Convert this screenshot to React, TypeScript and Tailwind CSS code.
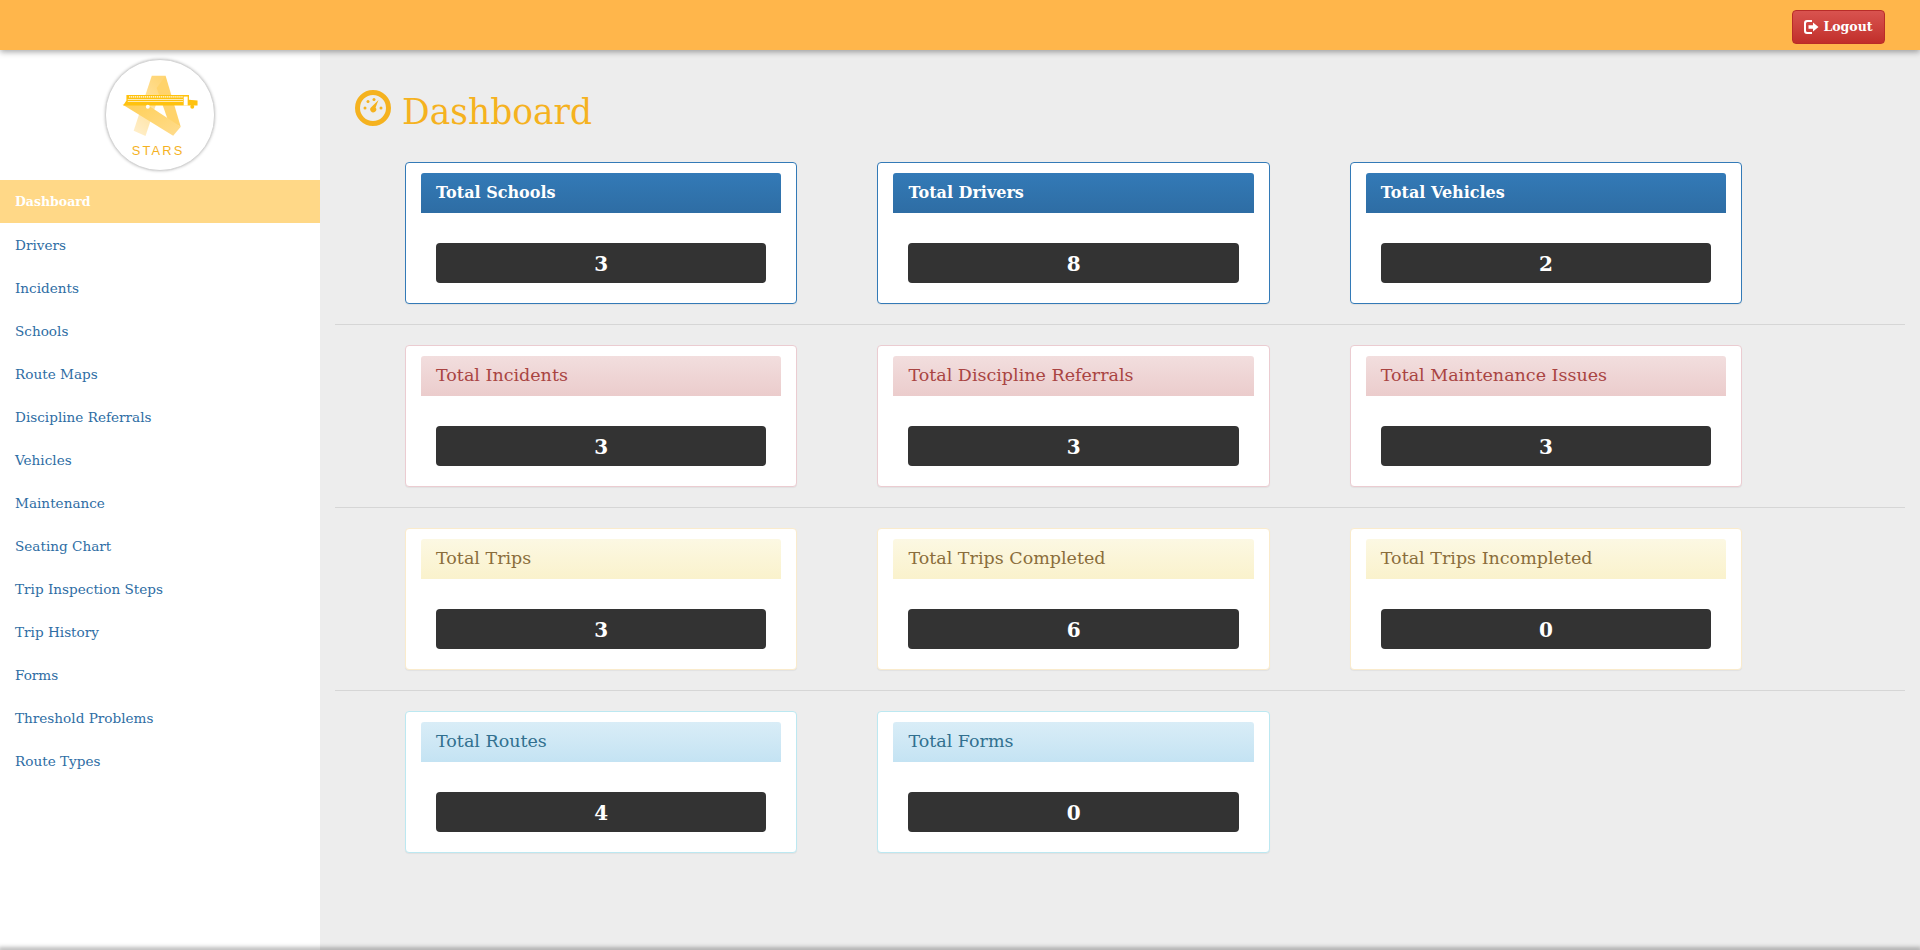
import React from "react";

const menu = [
  "Dashboard",
  "Drivers",
  "Incidents",
  "Schools",
  "Route Maps",
  "Discipline Referrals",
  "Vehicles",
  "Maintenance",
  "Seating Chart",
  "Trip Inspection Steps",
  "Trip History",
  "Forms",
  "Threshold Problems",
  "Route Types",
];

const tones = {
  primary: {
    box: "border-[#337ab7]",
    head: "bg-gradient-to-b from-[#337ab7] to-[#2e6da4] text-white font-bold text-[16px]",
  },
  danger: {
    box: "border-[#ebccd1]",
    head: "bg-gradient-to-b from-[#f2dede] to-[#ebcccc] text-[#a94442] text-[17.500px] pb-[2px]",
  },
  warning: {
    box: "border-[#faebcc]",
    head: "bg-gradient-to-b from-[#fcf8e3] to-[#faf2cc] text-[#8a6d3b] text-[17.500px] pb-[2px]",
  },
  info: {
    box: "border-[#bce8f1]",
    head: "bg-gradient-to-b from-[#d9edf7] to-[#c4e3f3] text-[#31708f] text-[17.500px] pb-[2px]",
  },
};

type Tone = keyof typeof tones;

const rows: { tone: Tone; items: [string, number][] }[] = [
  { tone: "primary", items: [["Total Schools", 3], ["Total Drivers", 8], ["Total Vehicles", 2]] },
  { tone: "danger", items: [["Total Incidents", 3], ["Total Discipline Referrals", 3], ["Total Maintenance Issues", 3]] },
  { tone: "warning", items: [["Total Trips", 3], ["Total Trips Completed", 6], ["Total Trips Incompleted", 0]] },
  { tone: "info", items: [["Total Routes", 4], ["Total Forms", 0]] },
];

const Logo = () => (
  <div className="w-[110px] h-[112px] rounded-full border border-[#d4d4d4] shadow-[0_0_3px_rgba(0,0,0,0.25)] bg-white">
    <svg viewBox="316 178 328 332" className="w-full h-full">
      <defs>
        <linearGradient id="leg" x1="0.7" y1="0" x2="0.2" y2="1">
          <stop offset="0" stopColor="#ffd677" />
          <stop offset="1" stopColor="#ffeec8" />
        </linearGradient>
        <linearGradient id="band" x1="0" y1="0" x2="1" y2="1">
          <stop offset="0" stopColor="#ffcf55" />
          <stop offset="1" stopColor="#ffdc8e" />
        </linearGradient>
      </defs>
      <polygon points="455,225 497,225 436,408 400,392" fill="url(#leg)" />
      <polygon points="497,225 543,380 505,362 470,262" fill="#ffd36b" />
      <polygon points="366,312 440,312 543,380 520,407" fill="url(#band)" />
      <polygon points="378,283 568,283 568,298 594,300 594,315 368,315 378,300" fill="#ffc20e" />
      <path d="M386 289 H550" stroke="#fff" strokeWidth="4" strokeDasharray="4 2" />
      <rect x="382" y="296" width="168" height="2" fill="#fff" />
      <rect x="382" y="302" width="168" height="2" fill="#fff" />
      <rect x="552" y="288" width="12" height="27" fill="#fff" />
      <circle cx="578" cy="319" r="6" fill="#ffc20e" />
      <circle cx="443" cy="319" r="6" fill="#fff" />
      <text
        x="471"
        y="465"
        textAnchor="middle"
        textLength="153"
        fontSize="39"
        fill="#f5b21f"
        fontFamily="'Liberation Sans', sans-serif"
      >
        STARS
      </text>
    </svg>
  </div>
);

const GaugeIcon = () => (
  <svg viewBox="0 0 36 36" className="w-9 h-9 shrink-0" fill="#f5b21f">
    <circle cx="18" cy="18" r="15.500" fill="none" stroke="#f5b21f" strokeWidth="5" />
    <circle cx="10" cy="18" r="1.500" />
    <circle cx="13" cy="11.500" r="1.500" />
    <circle cx="19" cy="9.500" r="1.500" />
    <circle cx="26" cy="18" r="1.500" />
    <path d="M23.500 10 L20.600 17.500 A3 3 0 1 1 16.400 17 Z" />
  </svg>
);

const LogoutIcon = () => (
  <svg viewBox="0 0 15 14" className="w-[15px] h-[14px]" fill="#fff">
    <path d="M3 0h5v2H3.500A1.500 1.500 0 0 0 2 3.500v7A1.500 1.500 0 0 0 3.500 12H8v2H3a3 3 0 0 1-3-3V3a3 3 0 0 1 3-3z" />
    <path d="M4.500 5.200h4.500V2.600L14.500 7 9 11.400V8.800H4.500z" />
  </svg>
);

const Card = ({ title, value, tone }: { title: string; value: number; tone: Tone }) => (
  <div className={`w-[392.400px] h-[142px] bg-white border rounded pt-[10px] px-[15px] shadow-[0_1px_1px_rgba(0,0,0,0.05)] ${tones[tone].box}`}>
    <div className={`h-10 pl-[15px] flex items-center rounded-t-[3px] ${tones[tone].head}`}>{title}</div>
    <div className="mt-[30px] mx-[15px] h-10 pt-px rounded bg-[#333333] text-white font-bold text-[20px] flex items-center justify-center">
      {value}
    </div>
  </div>
);

export default function App() {
  return (
    <div className="h-screen flex flex-col overflow-hidden bg-[#ededed] font-['DejaVu_Serif',serif]">
      <header className="relative z-10 h-[50px] shrink-0 bg-[#ffb64b] shadow-[0_2px_6px_rgba(0,0,0,0.35)] flex items-center justify-end pr-[35px]">
        <button className="w-[93px] h-[34px] mt-[4px] rounded border border-[#b92c28] bg-gradient-to-b from-[#d9534f] to-[#c12e2a] text-white text-[12.500px] font-bold flex items-center justify-center gap-[4px]">
          <LogoutIcon />
          Logout
        </button>
      </header>
      <div className="flex-1 flex min-h-0">
        <aside className="w-[320px] shrink-0 bg-white">
          <div className="h-[130px] flex items-center justify-center">
            <Logo />
          </div>
          <nav className="text-[13.600px] text-[#2e6da4]">
            {menu.map((m, i) => (
              <a
                key={m}
                className={`h-[43px] pt-px flex items-center pl-[15px] ${i === 0 ? "bg-[#ffd887] text-white font-bold text-[12.500px]" : ""}`}
              >
                {m}
              </a>
            ))}
          </nav>
        </aside>
        <main className="flex-1 pl-[15px] pr-[15px] pt-10">
          <h1 className="h-[72px] pl-5 flex items-start gap-[11px] text-[#f5b21f] text-[34.500px] leading-[44px]">
            <GaugeIcon />
            Dashboard
          </h1>
          {rows.map((r, i) => (
            <div key={r.tone}>
              {i > 0 && <hr className="my-5 border-[#d6d6d6]" />}
              <div className="pl-[70px] flex gap-[80px]">
                {r.items.map(([title, value]) => (
                  <Card key={title} title={title} value={value} tone={r.tone} />
                ))}
              </div>
            </div>
          ))}
        </main>
      </div>
      <div className="relative z-10 h-0 shadow-[0_0_5px_2px_rgba(0,0,0,0.4)]" />
    </div>
  );
}
